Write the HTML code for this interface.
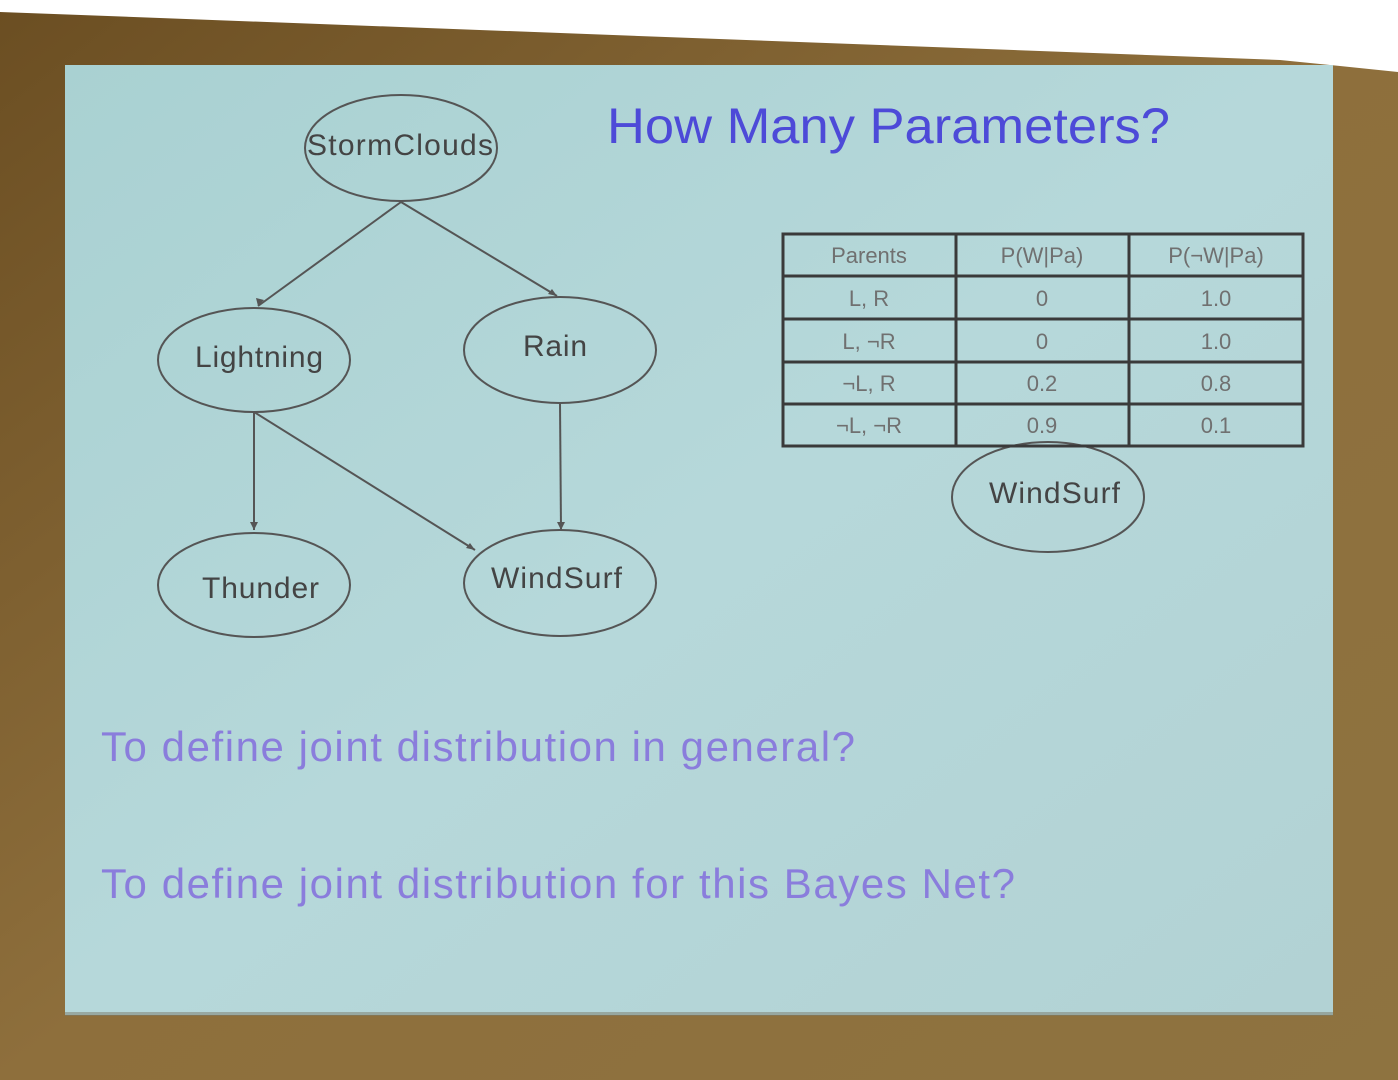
<!DOCTYPE html>
<html><head><meta charset="utf-8"><style>
html,body{margin:0;padding:0;width:1398px;height:1080px;overflow:hidden;background:#8a6b38}
svg{display:block}
text{font-family:"Liberation Sans",sans-serif}
</style></head><body>
<svg width="1398" height="1080" viewBox="0 0 1398 1080" xmlns="http://www.w3.org/2000/svg">
<defs>
<linearGradient id="bg" x1="0" y1="0" x2="1" y2="1">
<stop offset="0" stop-color="#6b4e22"/><stop offset="0.5" stop-color="#8e6f3c"/><stop offset="1" stop-color="#8e7340"/>
</linearGradient>
<linearGradient id="sl" x1="0" y1="0" x2="1" y2="1">
<stop offset="0" stop-color="#a9d1d2"/><stop offset="0.5" stop-color="#b6d8da"/><stop offset="1" stop-color="#b2d2d4"/>
</linearGradient>
</defs>
<rect width="1398" height="1080" fill="url(#bg)"/>
<polygon points="0,0 1398,0 1398,72 1340,66 1280,60 0,12" fill="#ffffff"/>
<rect x="65" y="65" width="1268" height="950" fill="url(#sl)"/>
<rect x="65" y="1012" width="1268" height="4" fill="#7a7a6a" opacity="0.5"/>
<text x="607" y="143" font-size="50" fill="#4d4ad8" textLength="563" lengthAdjust="spacingAndGlyphs">How Many Parameters?</text>
<g fill="none" stroke="#555" stroke-width="2">
<ellipse cx="401" cy="148" rx="96" ry="53"/>
<ellipse cx="254" cy="360" rx="96" ry="52"/>
<ellipse cx="560" cy="350" rx="96" ry="53"/>
<ellipse cx="254" cy="585" rx="96" ry="52"/>
<ellipse cx="560" cy="583" rx="96" ry="53"/>
<ellipse cx="1048" cy="497" rx="96" ry="55"/>
<line x1="401" y1="202" x2="258" y2="306"/>
<line x1="401" y1="202" x2="557" y2="296"/>
<line x1="254" y1="412" x2="254" y2="530"/>
<line x1="254" y1="412" x2="475" y2="550"/>
<line x1="560" y1="403" x2="561" y2="530"/>
</g>
<g fill="#555">
<polygon points="258,306 256,298 264,300"/>
<polygon points="557,296 548,294 552,289"/>
<polygon points="254,530 250,522 258,522"/>
<polygon points="475,550 466,548 470,543"/>
<polygon points="561,530 557,522 565,522"/>
</g>
<g font-size="30" fill="#444" lengthAdjust="spacingAndGlyphs">
<text x="307" y="155" textLength="186">StormClouds</text>
<text x="195" y="367" textLength="128">Lightning</text>
<text x="523" y="356" textLength="64">Rain</text>
<text x="202" y="598" textLength="117">Thunder</text>
<text x="491" y="588" textLength="131">WindSurf</text>
<text x="989" y="503" textLength="131">WindSurf</text>
</g>
<g stroke="#3a3a3a" stroke-width="3" fill="none">
<rect x="783" y="234" width="520" height="212"/>
<line x1="783" y1="276" x2="1303" y2="276"/>
<line x1="783" y1="319" x2="1303" y2="319"/>
<line x1="783" y1="362" x2="1303" y2="362"/>
<line x1="783" y1="404" x2="1303" y2="404"/>
<line x1="956" y1="234" x2="956" y2="446"/>
<line x1="1129" y1="234" x2="1129" y2="446"/>
</g>
<g font-size="22" fill="#707070" text-anchor="middle">
<text x="869" y="263">Parents</text><text x="1042" y="263">P(W|Pa)</text><text x="1216" y="263">P(¬W|Pa)</text>
<text x="869" y="306">L, R</text><text x="1042" y="306">0</text><text x="1216" y="306">1.0</text>
<text x="869" y="349">L, ¬R</text><text x="1042" y="349">0</text><text x="1216" y="349">1.0</text>
<text x="869" y="391">¬L, R</text><text x="1042" y="391">0.2</text><text x="1216" y="391">0.8</text>
<text x="869" y="433">¬L, ¬R</text><text x="1042" y="433">0.9</text><text x="1216" y="433">0.1</text>
</g>
<g font-size="42" fill="#8a7ddc" lengthAdjust="spacingAndGlyphs">
<text x="101" y="761" textLength="754">To define joint distribution in general?</text>
<text x="101" y="898" textLength="914">To define joint distribution for this Bayes Net?</text>
</g>
</svg>
</body></html>
